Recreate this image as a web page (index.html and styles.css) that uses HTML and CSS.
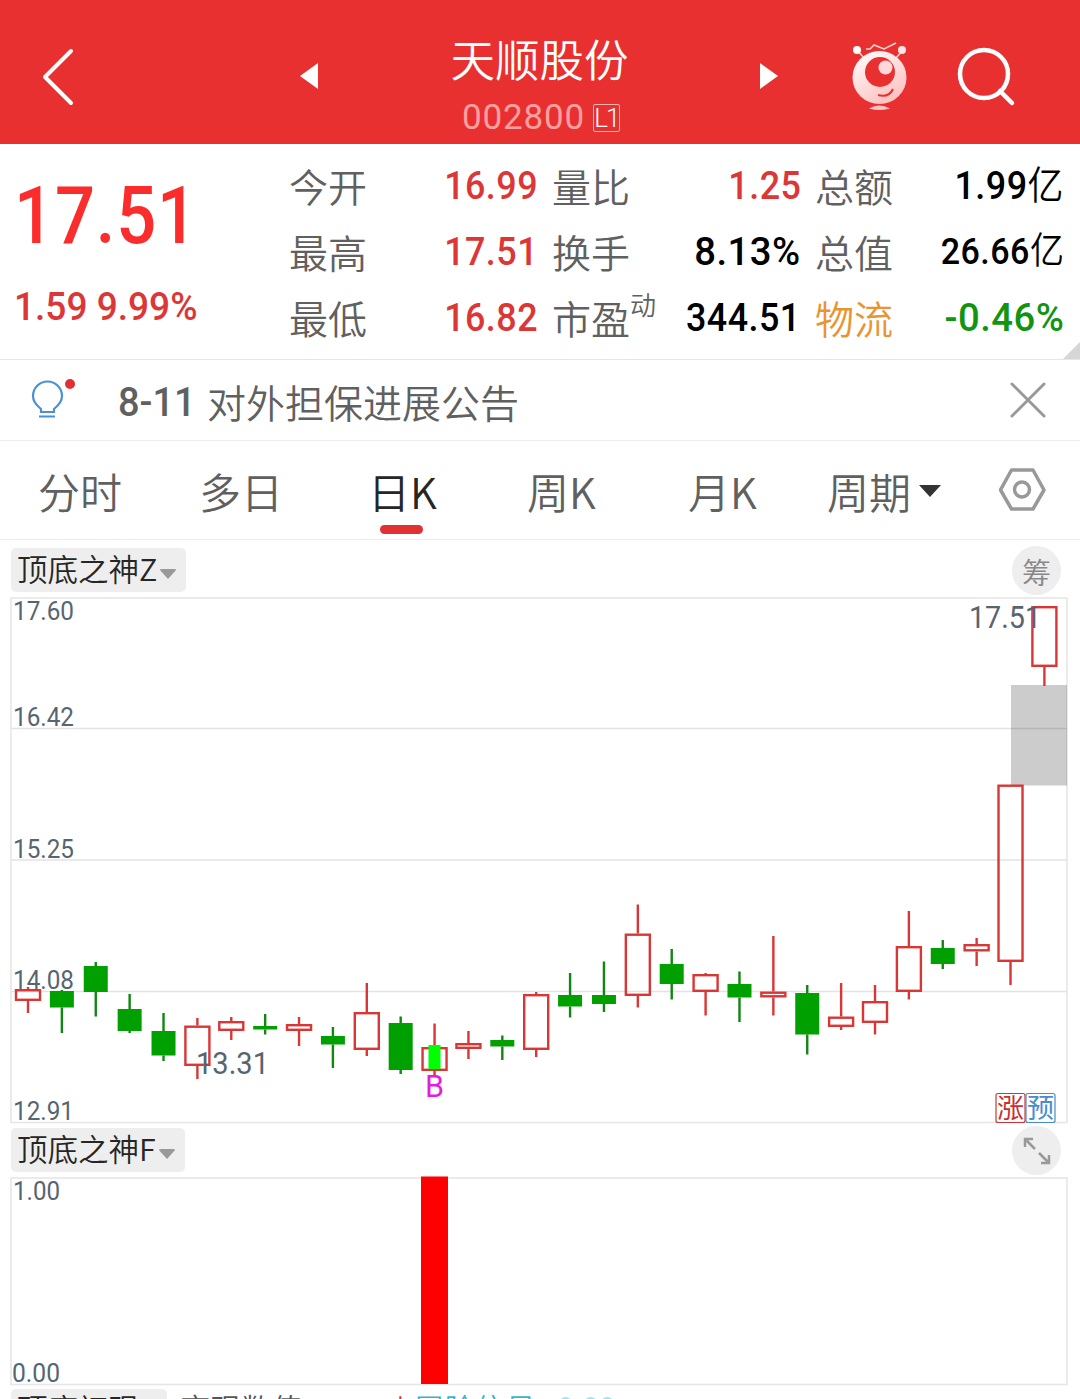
FILE: index.html
```html
<!DOCTYPE html>
<html lang="zh-CN">
<head>
  <meta charset="UTF-8" />
  <meta name="viewport" content="width=device-width, initial-scale=1" />
  <title>天顺股份 002800</title>
  <link rel="stylesheet" href="styles.css">
</head>
<body>

  <!-- 顶部导航 -->
  <header class="header">
    <svg class="icon-back" width="36" height="60" viewBox="0 0 36 60"><path d="M31 5L5 31L31 57" /></svg>
    <svg class="icon-prev" width="20" height="28" viewBox="0 0 20 28"><path d="M19 1V27L1 14Z" /></svg>
    <div class="title">
      <h1 class="name">天顺股份</h1>
      <div class="code"><span>002800</span><span class="level">L1</span></div>
    </div>
    <svg class="icon-next" width="20" height="28" viewBox="0 0 20 28"><path d="M1 1V27L19 14Z" /></svg>
    <svg class="icon-robot" width="56" height="70" viewBox="0 0 56 70">
      <defs>
        <linearGradient id="robotFill" x1="0" y1="0" x2="0.6" y2="1">
          <stop offset="0" stop-color="#fff" />
          <stop offset="1" stop-color="#ffc2c2" />
        </linearGradient>
      </defs>
      <path class="antenna" d="M5 9L12 17M51 9L44 17" />
      <path class="spark" d="M14 8H18L22 4L32 8L44 2" />
      <circle cx="5" cy="9" r="4" fill="#fff" />
      <circle cx="50" cy="9" r="4" fill="#ffe4e4" />
      <ellipse cx="27.500" cy="36.500" rx="27" ry="26.500" fill="url(#robotFill)" />
      <circle cx="28" cy="31" r="15" fill="#e93030" />
      <circle cx="33.500" cy="26.500" r="7" fill="#ffd9d9" />
      <path class="smile" d="M26 54Q37 57 41 48" />
      <path d="M17 67.500Q27 61.500 38 67.500Q27 70.500 17 67.500Z" fill="#ffc2c2" />
    </svg>
    <svg class="icon-search" width="60" height="60" viewBox="0 0 60 60"><circle cx="27" cy="27" r="24" /><path d="M43 44L55 56" /></svg>
  </header>

  <!-- 行情数据 -->
  <section class="quote">
    <div class="price">
      <div class="last num">17.51</div>
      <div class="change num">1.59 9.99%</div>
    </div>
    <dl class="stats">
      <div class="stat"><dt>今开</dt><dd class="num up">16.99</dd></div>
      <div class="stat"><dt>量比</dt><dd class="num up">1.25</dd></div>
      <div class="stat"><dt>总额</dt><dd class="num">1.99<span class="unit">亿</span></dd></div>
      <div class="stat"><dt>最高</dt><dd class="num up">17.51</dd></div>
      <div class="stat"><dt>换手</dt><dd class="num percent">8.13%</dd></div>
      <div class="stat"><dt>总值</dt><dd class="num small">26.66<span class="unit">亿</span></dd></div>
      <div class="stat"><dt>最低</dt><dd class="num up">16.82</dd></div>
      <div class="stat"><dt>市盈<sup>动</sup></dt><dd class="num">344.51</dd></div>
      <div class="stat"><dt class="sector">物流</dt><dd class="num percent down">-0.46%</dd></div>
    </dl>
    <i class="corner"></i>
  </section>

  <!-- 公告 -->
  <section class="notice">
    <svg class="icon-bulb" width="48" height="44" viewBox="0 0 48 44">
      <path d="M10 34V31C5 27 2 23 2 18A14.500 14.500 0 0 1 31 18C31 23 28 27 23 31V34ZM8 38.500H24" />
      <circle cx="39" cy="6" r="5" />
    </svg>
    <p class="notice-text"><span class="num">8-11</span>对外担保进展公告</p>
    <svg class="icon-close" width="36" height="36" viewBox="0 0 36 36"><path d="M2 2L34 34M34 2L2 34" /></svg>
  </section>

  <!-- 周期切换 -->
  <nav class="tabs">
    <a class="tab">分时</a>
    <a class="tab">多日</a>
    <a class="tab active">日K</a>
    <a class="tab">周K</a>
    <a class="tab">月K</a>
    <a class="tab period">周期<i class="caret"></i></a>
    <svg class="icon-setting" width="48" height="44" viewBox="0 0 48 44">
      <path d="M12.500 2H34L45 22L34 41H12.500L1.500 22Z" /><circle cx="23" cy="21.500" r="7.500" />
    </svg>
  </nav>

  <!-- 主图 -->
  <div class="panel-head">
    <div class="indicator">顶底之神Z<i class="caret"></i></div>
    <div class="round">筹</div>
  </div>
  <svg class="chart" width="1080" height="528" viewBox="0 597 1080 528">
    <path class="grid" d="M11 728.500H1067M11 860H1067M11 991.500H1067" />
    <rect class="frame" x="11" y="598" width="1056" height="524.500" />
    <g class="axis">
      <text x="13" y="620" textLength="61" lengthAdjust="spacingAndGlyphs">17.60</text>
      <text x="13" y="726" textLength="61" lengthAdjust="spacingAndGlyphs">16.42</text>
      <text x="13" y="858" textLength="61" lengthAdjust="spacingAndGlyphs">15.25</text>
      <text x="13" y="989" textLength="61" lengthAdjust="spacingAndGlyphs">14.08</text>
      <text x="13" y="1120" textLength="61" lengthAdjust="spacingAndGlyphs">12.91</text>
    </g>
    <rect class="gap" x="1011" y="685" width="56" height="100.500" />
    <g id="candles"></g>
    <rect x="428.500" y="1045" width="12" height="24" fill="#00ff00" />
    <text class="mark" x="425" y="1097" textLength="19" lengthAdjust="spacingAndGlyphs">B</text>
    <g class="extreme">
      <text x="969" y="628" textLength="72" lengthAdjust="spacingAndGlyphs">17.51</text>
      <text x="196" y="1074" textLength="73" lengthAdjust="spacingAndGlyphs">13.31</text>
    </g>
    <g class="badges">
      <rect class="red" x="996" y="1093.500" width="29" height="29" rx="2" />
      <rect class="blue" x="1026" y="1093.500" width="29" height="29" rx="2" />
      <text class="red" x="997" y="1118">涨</text>
      <text class="blue" x="1027" y="1118">预</text>
    </g>
  </svg>

  <!-- 副图 -->
  <div class="panel-head sub">
    <div class="indicator">顶底之神F<i class="caret"></i></div>
    <div class="round">
      <svg class="icon-expand" width="28" height="28" viewBox="0 0 28 28">
        <path d="M2 10V2H10M3 3L12 12M26 18V26H18M25 25L16 16" />
      </svg>
    </div>
  </div>
  <svg class="chart" width="1080" height="210" viewBox="0 1176 1080 210">
    <rect class="frame" x="11" y="1178" width="1056" height="206.500" />
    <rect x="421" y="1176.500" width="27" height="207.500" fill="#ff0000" />
    <g class="axis">
      <text x="13" y="1200" textLength="47" lengthAdjust="spacingAndGlyphs">1.00</text>
      <text x="12" y="1382" textLength="48" lengthAdjust="spacingAndGlyphs">0.00</text>
    </g>
  </svg>

  <div class="panel-head last-head">
    <div class="indicator">顶底初现<i class="caret"></i></div>
    <span class="legend gray">变现数值</span>
    <span class="legend plus">+</span>
    <span class="legend cyan">冒险信号</span>
    <span class="legend pale">: 0.00</span>
  </div>

  <script>
    // 涨跌, 最高, 实体上沿, 实体下沿, 最低
    const data = [
      ["up", 987, 989, 1001, 1013], ["down", 990, 991, 1007.5, 1033], ["down", 962, 966, 992, 1016.5],
      ["down", 994, 1009, 1031, 1033], ["down", 1013, 1031, 1055.5, 1061], ["up", 1018, 1025.5, 1066, 1079],
      ["up", 1017, 1021, 1031, 1040], ["down", 1014, 1026, 1029.5, 1034.5], ["up", 1017, 1024, 1031, 1046],
      ["down", 1027, 1036, 1044.5, 1068], ["up", 983, 1012, 1050, 1056], ["down", 1016.5, 1023, 1070, 1074],
      ["up", 1023.5, 1047, 1071, 1075], ["up", 1031, 1043, 1049, 1059], ["down", 1035.5, 1040, 1046.5, 1060],
      ["up", 992, 994, 1050, 1057], ["down", 973, 995, 1006.5, 1017.5], ["down", 961.5, 995, 1004, 1012],
      ["up", 904.5, 933.5, 996, 1007.5], ["down", 949, 964, 984, 999.5], ["up", 973, 974, 992, 1015.5],
      ["down", 971.5, 984, 997.5, 1022], ["up", 936, 991.5, 997.5, 1015.5], ["down", 985, 993, 1034.5, 1054.5],
      ["up", 983, 1016.5, 1027, 1030], ["up", 985, 1001, 1023, 1034.5], ["up", 911, 946, 992, 999.5],
      ["down", 940, 948, 964, 969], ["up", 938, 944, 951.5, 966], ["up", 784.5, 784.5, 962, 985],
      ["up", 606, 606, 667, 686]
    ];

    let html = "";
    data.forEach(([type, high, top, bottom, low], i) => {
      const x = 28 + i * 33.88;
      // 阳线空心，边框要往里收一点
      const inset = type === "up" ? 1.2 : 0;
      const half = 12;
      html += `<g class="${type}"><path d="M${x} ${high}V${top}M${x} ${bottom}V${low}"/>` +
        `<rect x="${x - half}" y="${top + inset}" width="${half * 2}" height="${bottom - top - inset * 2}"/></g>`;
    });
    document.getElementById("candles").innerHTML = html;
  </script>
</body>
</html>
```

FILE: styles.css
```css
* {
  box-sizing: border-box;
}

body {
  width: 1080px;
  height: 1399px;
  margin: 0;
  overflow: hidden;
  background: #fff;
  color: #606060;
  font-family: "Noto Sans CJK SC", sans-serif;
  font-weight: 350;
}

svg {
  display: block;
  fill: none;
}

.num {
  font-family: Roboto, "Noto Sans CJK SC", sans-serif;
  font-weight: 500;
  white-space: nowrap;
}

/* 顶部 */
.header {
  display: grid;
  grid-template-columns: 299px 100px 281px 79px 93px 106px 1fr;
  height: 144px;
  background: #e93030;
  color: #fff;
}

.icon-back {
  margin: 46px 0 0 40px;
  stroke: #fff;
  stroke-width: 4;
  stroke-linecap: round;
  stroke-linejoin: round;
}

.icon-prev,
.icon-next {
  margin-top: 62px;
  fill: #fff;
}

.title {
  text-align: center;
}

.name {
  margin: 27px 0 0;
  font-size: 44.5px;
  font-weight: 350;
  line-height: 62px;
}

.code {
  display: flex;
  justify-content: center;
  align-items: center;
  gap: 8px;
  margin-top: 11px;
  padding-left: 3px;
  color: #ffa0a0;
  font-family: Roboto, sans-serif;
  font-size: 35px;
  font-weight: 400;
  line-height: 36px;
  letter-spacing: 0.8px;
}

.level {
  width: 27px;
  height: 28px;
  border: 1px solid #ffb4b4;
  border-radius: 2px;
  color: #fff;
  font-size: 26px;
  font-weight: 300;
  line-height: 27px;
  letter-spacing: -2px;
}

.icon-next {
  margin-left: 79px;
}

.icon-robot {
  margin: 41px 0 0 93px;
}

.antenna,
.spark {
  stroke: #ffd4d4;
  stroke-width: 1.5;
}

.smile {
  stroke: #e93030;
  stroke-width: 2;
}

.icon-search {
  margin: 47px 0 0 105px;
  stroke: #fff;
  stroke-width: 4.5;
  stroke-linecap: round;
}

/* 行情 */
.quote {
  position: relative;
  display: grid;
  grid-template-columns: 289px 775px;
  height: 216px;
  border-bottom: 1px solid #e6e6e6;
}

.price {
  padding: 32px 0 0 14px;
  color: #fb2c2c;
}

.last {
  font-size: 80px;
  line-height: 80px;
  letter-spacing: 1px;
  transform: scaleX(0.88);
  transform-origin: left;
}

.change {
  margin-top: 31px;
  color: #dc3636;
  font-size: 39px;
  line-height: 40px;
  transform: scaleX(0.95);
  transform-origin: left;
}

.stats {
  display: grid;
  grid-template-columns: repeat(3, 249px);
  grid-auto-rows: 66px;
  column-gap: 14px;
  margin: 8px 0 0;
}

.stat {
  display: flex;
  justify-content: space-between;
  align-items: center;
}

dt {
  flex: none;
  font-size: 39px;
  line-height: 66px;
  white-space: nowrap;
}

sup {
  font-size: 26px;
  line-height: 0;
  vertical-align: 19px;
}

dd {
  margin: 2px 0 0;
  color: #000;
  font-size: 39px;
  line-height: 60px;
  letter-spacing: 0.5px;
  transform: scaleX(0.92);
  transform-origin: right;
}

.percent {
  transform: scaleX(0.98);
}

.small {
  font-size: 37px;
}

.unit {
  font-weight: 350;
}

.up {
  color: #dc3636;
}

.down {
  color: #119511;
}

.sector {
  color: #ea942f;
}

.corner {
  position: absolute;
  right: 0;
  bottom: 0;
  border-left: 17px solid transparent;
  border-bottom: 17px solid #d6d6d6;
}

/* 公告 */
.notice {
  display: flex;
  align-items: center;
  height: 81px;
  padding: 0 34px 0 31px;
  border-bottom: 1px solid #ececec;
}

.icon-bulb path {
  stroke: #4a90d2;
  stroke-width: 2.2;
}

.icon-bulb circle {
  fill: #e03030;
}

.notice-text {
  flex: 1;
  display: flex;
  margin: 3px 0 0 39px;
  font-size: 39px;
  line-height: 60px;
}

.notice-text .num {
  width: 89px;
  padding-top: 2px;
  font-size: 40px;
  transform: scaleX(0.95);
  transform-origin: left;
}

.icon-close {
  stroke: #999;
  stroke-width: 3;
  stroke-linecap: round;
}

/* 周期 */
.tabs {
  display: grid;
  grid-template-columns: 161px 169px 159px 161px 139px 210px 48px;
  height: 99px;
  border-bottom: 1px solid #ececec;
  font-size: 42px;
  line-height: 100px;
}

.tab {
  position: relative;
  height: 98px;
  padding-left: 38px;
  white-space: nowrap;
}

.active {
  color: #262626;
}

.active::after {
  content: "";
  position: absolute;
  left: 50px;
  bottom: 5px;
  width: 43px;
  height: 9px;
  border-radius: 5px;
  background: #e03232;
}

.caret {
  display: inline-block;
  border-left: 11px solid transparent;
  border-right: 11px solid transparent;
  border-top: 12px solid #333;
  margin-left: 8px;
  vertical-align: 12px;
}

.icon-setting {
  margin-top: 27px;
  stroke: #999;
  stroke-width: 3.5;
  stroke-linejoin: round;
}

/* 图表 */
.panel-head {
  display: flex;
  justify-content: space-between;
  height: 57px;
  padding: 8px 19px 0 11px;
}

.indicator {
  height: 44px;
  padding: 0 9px 0 6px;
  border-radius: 5px;
  background: #eee;
  color: #262626;
  font-size: 30.5px;
  line-height: 40px;
  white-space: nowrap;
}

.indicator .caret {
  margin-left: 2px;
  border-left-width: 9px;
  border-right-width: 9px;
  border-top: 10px solid #999;
  border-radius: 3px;
  vertical-align: 2px;
}

.round {
  display: flex;
  justify-content: center;
  align-items: center;
  width: 49px;
  height: 49px;
  margin-top: -2px;
  border-radius: 50%;
  background: #eee;
  color: #888;
  font-size: 29px;
}

.icon-expand {
  stroke: #999;
  stroke-width: 2.5;
}

.chart {
  font-family: Roboto, "Noto Sans CJK SC", sans-serif;
}

.grid {
  stroke: #e3e3e3;
  stroke-width: 1.3;
}

.frame {
  stroke: #e6e6e6;
  stroke-width: 1.6;
}

.axis {
  fill: #566570;
  font-size: 26px;
  font-weight: 400;
}

.extreme {
  fill: #566570;
  font-size: 31px;
  font-weight: 400;
}

.gap {
  fill: #000;
  fill-opacity: 0.2;
}

#candles .up {
  stroke: #d93636;
  stroke-width: 2.4;
}

#candles .down path {
  stroke: #118611;
  stroke-width: 2.4;
}

#candles .down rect {
  fill: #00a000;
}

.mark {
  fill: #e01ee0;
  font-size: 31px;
  font-weight: 400;
}

.badges {
  font-size: 27px;
  font-weight: 400;
}

.badges rect {
  stroke-width: 1.2;
}

rect.red {
  stroke: #c43a3a;
}

rect.blue {
  stroke: #4a8ccc;
}

text.red {
  fill: #c93030;
}

text.blue {
  fill: #4a8ccc;
}

.sub {
  height: 51px;
  padding-top: 3px;
}

.last-head {
  justify-content: flex-start;
  height: 60px;
  padding-top: 3px;
}

.last-head .indicator {
  width: 156px;
  line-height: 38px;
}

.legend {
  font-size: 30.5px;
  line-height: 38px;
  white-space: nowrap;
}

.gray {
  margin-left: 13px;
  color: #555;
}

.plus {
  width: 22px;
  margin-left: 90px;
  color: #e03232;
  line-height: 26px;
}

.cyan {
  color: #38b6c8;
}

.pale {
  margin-left: 6px;
  color: #a5e6ee;
  line-height: 34px;
}
```
